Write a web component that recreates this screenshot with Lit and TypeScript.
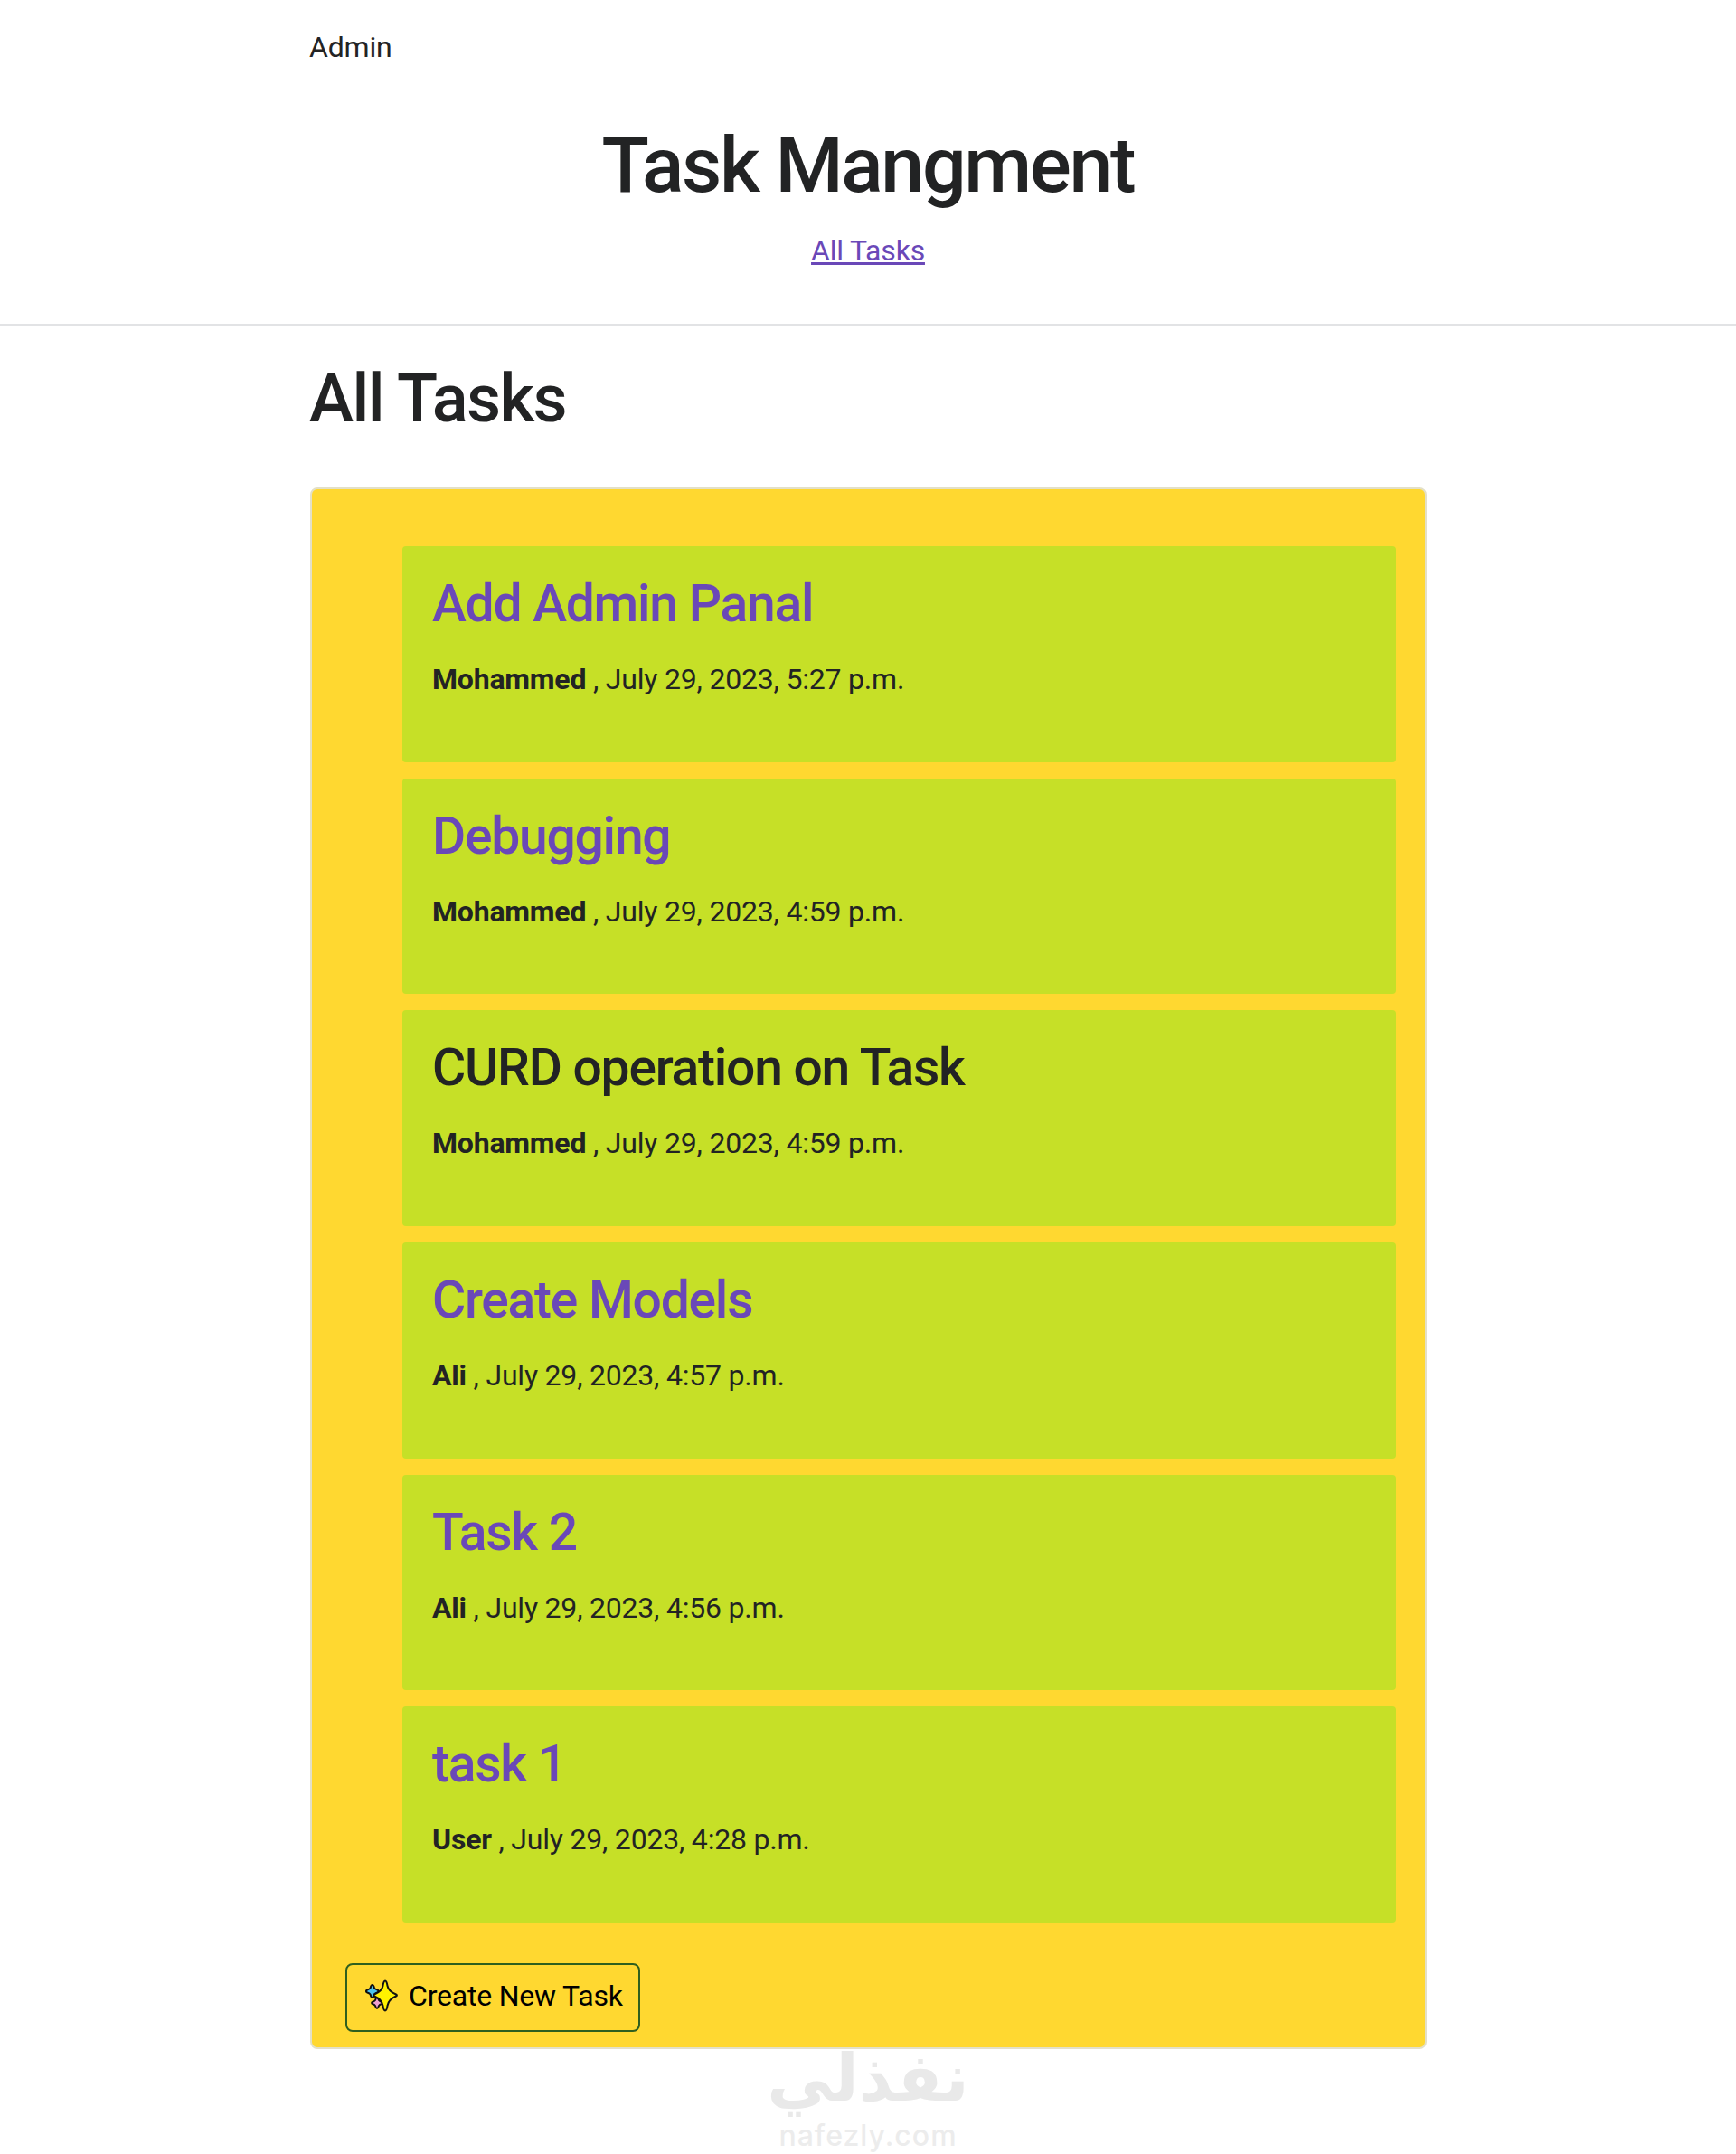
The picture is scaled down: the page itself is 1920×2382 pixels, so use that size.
import { LitElement, html, css } from "lit";
import { customElement } from "lit/decorators.js";

const TASKS = [
  { title: "Add Admin Panal", user: "Mohammed", date: "July 29, 2023, 5:27 p.m.", visited: false },
  { title: "Debugging", user: "Mohammed", date: "July 29, 2023, 4:59 p.m.", visited: false },
  { title: "CURD operation on Task", user: "Mohammed", date: "July 29, 2023, 4:59 p.m.", visited: true },
  { title: "Create Models", user: "Ali", date: "July 29, 2023, 4:57 p.m.", visited: false },
  { title: "Task 2", user: "Ali", date: "July 29, 2023, 4:56 p.m.", visited: false },
  { title: "task 1", user: "User", date: "July 29, 2023, 4:28 p.m.", visited: false },
];

@customElement("app-root")
export class AppRoot extends LitElement {
  static styles = css`
    :host {
      display: block;
      position: relative;
      height: 2382px;
      overflow: hidden;
      background: #fff;
      font-family: Roboto, "Liberation Sans", sans-serif;
      font-size: 32px;
      line-height: 48px;
      letter-spacing: -0.2px;
      color: #222324;
    }
    .wrap { width: 1236px; margin: 0 auto; }
    .admin { height: 105px; padding-top: 28px; box-sizing: border-box; text-align: left; }
    header { border-bottom: 2px solid #e2e3e5; height: 360px; box-sizing: border-box; text-align: center; }
    h1 { margin: 30px 0 0; font-size: 86px; line-height: 96px; font-weight: 500; letter-spacing: -2.35px; }
    .nav { margin-top: 22px; }
    a { color: #6a48b8; }
    .main { padding-top: 38px; }
    h2 { margin: 0 0 55px; font-size: 74px; line-height: 86px; font-weight: 500; letter-spacing: -1.6px; }
    .card {
      background: #ffd830;
      border: 2px solid #e3e0c8;
      border-radius: 8px;
      box-sizing: border-box;
      height: 1727px;
      margin-left: 1px;
      padding-top: 63px;
    }
    ul {
      list-style: none;
      margin: 0;
      padding: 0 32px 0 100px;
      display: flex;
      flex-direction: column;
      gap: 18px;
    }
    li {
      background: #c6e027;
      border-radius: 4px;
      height: 238.7px;
      box-sizing: border-box;
      padding: 32px 33px 0;
    }
    .title { font-size: 57px; line-height: 64px; font-weight: 500; letter-spacing: -1.25px; color: #6a48b8; margin: 0 0 27px; }
    .title.visited { color: #222324; }
    .meta { margin: 0; }
    .meta b { font-weight: 700; }
    .foot { padding: 45px 0 0 37px; }
    button {
      display: inline-flex;
      align-items: center;
      gap: 12px;
      height: 76px;
      width: 326px;
      box-sizing: border-box;
      padding: 0 0 4px 20px;
      font: inherit;
      letter-spacing: inherit;
      color: #000;
      background: transparent;
      border: 2px solid #2f5f1e;
      border-radius: 8px;
    }
    svg { width: 36px; height: 36px; display: block; flex: none; }
    .mark {
      position: absolute;
      left: 800px;
      top: 2262px;
      width: 320px;
      text-align: center;
      color: #e9e9e9;
    }
    .mark .ar { font: 700 73px/72px "DejaVu Sans", sans-serif; letter-spacing: 0; direction: rtl; }
    .mark .en { margin-top: 10px; font: 500 32px/36px Inter, sans-serif; letter-spacing: 1px; color: #ececec; }
  `;

  render() {
    return html`
      <header>
        <div class="wrap"><div class="admin">Admin</div></div>
        <h1>Task Mangment</h1>
        <div class="nav"><a href="#">All Tasks</a></div>
      </header>
      <div class="wrap main">
        <h2>All Tasks</h2>
        <div class="card">
          <ul>
            ${TASKS.map(
              (t) => html`<li>
                <div class="title ${t.visited ? "visited" : ""}">${t.title}</div>
                <p class="meta"><b>${t.user}</b> , ${t.date}</p>
              </li>`
            )}
          </ul>
          <div class="foot">
            <button>
              <svg viewBox="0 0 36 36" fill="none" stroke="#111" stroke-width="2" stroke-linejoin="round">
                <path d="M7 6C8.500 6 8.800 8 9.200 9.500 10 10.500 11 11 12.500 11.500 14.300 12.100 14.300 13.900 12.500 14.500 11 15 10 15.500 9.200 16.500 8.800 18 8.500 20 7 20 5.500 20 5.200 18 4.800 16.500 4 15.500 3 15 1.500 14.500-.3 13.900-.3 12.100 1.500 11.500 3 11 4 10.500 4.800 9.500 5.200 8 5.500 6 7 6Z" fill="#4cc3f0" transform="translate(.8 0)"/>
                <path d="M13 20C14.300 20 14.600 21.800 15 23 15.600 23.800 16.500 24.300 17.800 24.700 19.300 25.300 19.300 26.700 17.800 27.300 16.500 27.700 15.600 28.200 15 29 14.600 30.200 14.300 32 13 32 11.700 32 11.400 30.200 11 29 10.400 28.200 9.500 27.700 8.200 27.300 6.700 26.700 6.700 25.300 8.200 24.700 9.500 24.300 10.400 23.800 11 23 11.400 21.800 11.700 20 13 20Z" fill="#ee9fd0"/>
                <path d="M22 1.500C23.600 1.500 24 4 24.500 7 25.200 11 28 14 34 16.500 35.200 17 35.200 18 34 18.500 28 21 25.500 24 24.500 29 24 32 23.600 34.500 22 34.500 20.400 34.500 20 32 19.500 29 18.500 24 16 21 10 18.500 9 18 9 17 10 16.500 16 14 18.800 11 19.500 7 20 4 20.400 1.500 22 1.500Z" fill="#fff200"/>
              </svg>
              Create New Task
            </button>
          </div>
        </div>
      </div>
      <div class="mark">
        <div class="ar">نفذلي</div>
        <div class="en">nafezly.com</div>
      </div>
    `;
  }
}
